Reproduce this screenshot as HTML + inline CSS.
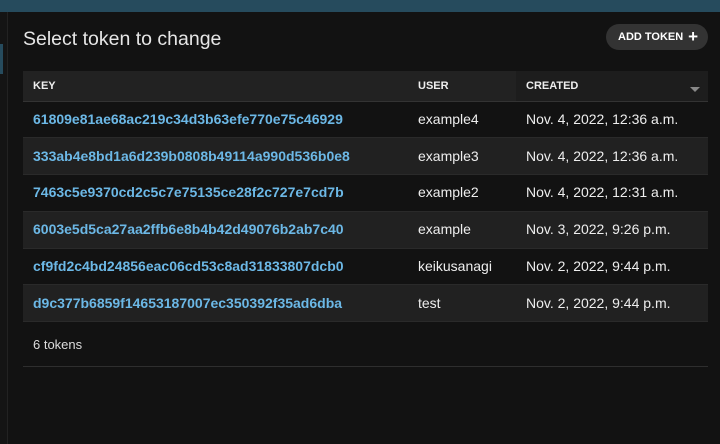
<!DOCTYPE html>
<html><head><meta charset="utf-8"><style>
*{margin:0;padding:0;box-sizing:border-box}
body{width:720px;height:444px;background:#121212;font-family:"Liberation Sans",sans-serif;color:#eee;position:relative;overflow:hidden}
.top{position:absolute;left:0;top:0;width:720px;height:12px;background:#264b5d}
.side{position:absolute;left:0;top:12px;width:8px;height:432px;background:#141414;border-right:1px solid #222}
.side i{position:absolute;left:0;width:3px;background:#264b5d}
h1{position:absolute;left:23px;top:28px;font-size:19.5px;font-weight:normal;color:#e6e6e6}
.btn{position:absolute;left:606px;top:24px;width:102px;height:26px;border-radius:13px;background:#333;color:#fff;font-size:11px;font-weight:bold;line-height:26px;padding-left:12px}
.btn span{position:absolute;right:10px;top:0;font-size:17px}
table{position:absolute;left:23px;top:71px;width:685px;border-collapse:collapse;font-size:14px}
th{height:30px;background:#222;text-align:left;font-size:11px;font-weight:bold;color:#eee;padding-left:10px;border-bottom:1px solid #333}
th.c{background:#1d1d1d;position:relative}
th.c:after{content:"";position:absolute;right:8px;top:16px;border:5px solid transparent;border-top-color:#888;border-bottom:0}
td{height:36.8px;padding-left:10px;border-bottom:1px solid #2a2a2a;color:#eee;padding-bottom:1px}
tr.a td{background:#212121}
td.k{color:#6cb8e6;font-weight:bold}
.foot{position:absolute;left:23px;top:322px;width:685px;height:45px;border-bottom:1px solid #2e2e2e;font-size:13px;padding:15px 0 0 10px;color:#ddd}
</style></head><body>
<div class="top"></div>
<div class="side"><i style="top:32px;height:30px"></i></div>
<h1>Select token to change</h1>
<div class="btn">ADD TOKEN<span>+</span></div>
<table>
<tr><th style="width:385px">KEY</th><th style="width:108px">USER</th><th class="c">CREATED</th></tr>
<tr><td class="k">61809e81ae68ac219c34d3b63efe770e75c46929</td><td>example4</td><td>Nov. 4, 2022, 12:36 a.m.</td></tr>
<tr class="a"><td class="k">333ab4e8bd1a6d239b0808b49114a990d536b0e8</td><td>example3</td><td>Nov. 4, 2022, 12:36 a.m.</td></tr>
<tr><td class="k">7463c5e9370cd2c5c7e75135ce28f2c727e7cd7b</td><td>example2</td><td>Nov. 4, 2022, 12:31 a.m.</td></tr>
<tr class="a"><td class="k">6003e5d5ca27aa2ffb6e8b4b42d49076b2ab7c40</td><td>example</td><td>Nov. 3, 2022, 9:26 p.m.</td></tr>
<tr><td class="k">cf9fd2c4bd24856eac06cd53c8ad31833807dcb0</td><td>keikusanagi</td><td>Nov. 2, 2022, 9:44 p.m.</td></tr>
<tr class="a"><td class="k">d9c377b6859f14653187007ec350392f35ad6dba</td><td>test</td><td>Nov. 2, 2022, 9:44 p.m.</td></tr>
</table>
<div class="foot">6 tokens</div>
</body></html>
